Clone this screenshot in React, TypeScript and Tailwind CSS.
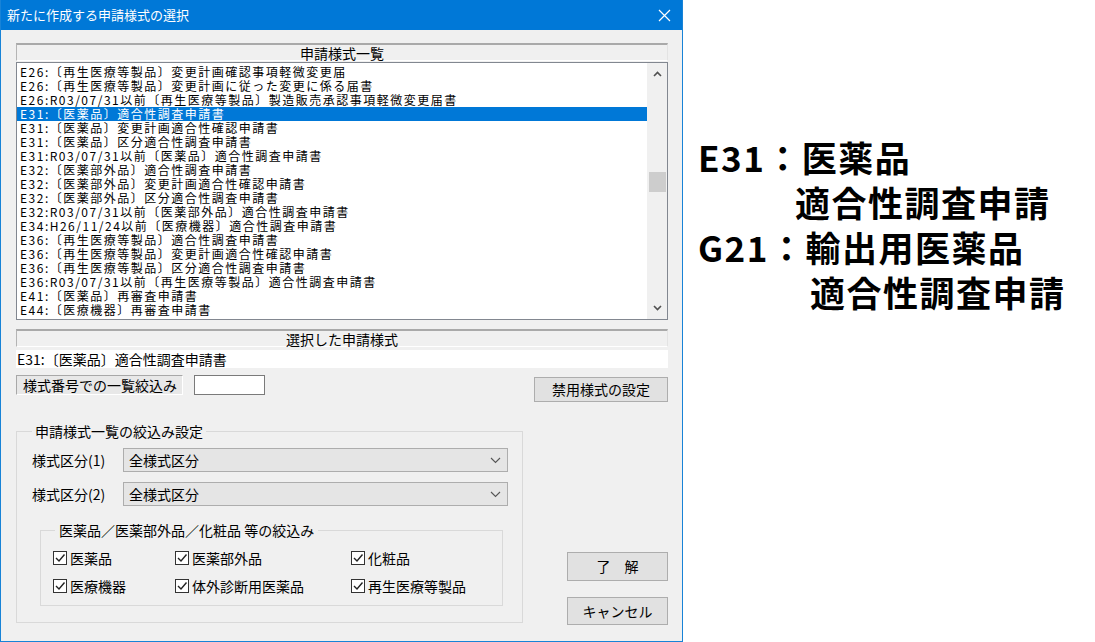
const UI = { fontFamily: '"Noto Sans CJK JP", "Noto Sans", sans-serif' };

const rows = [
  "E26:〔再生医療等製品〕変更計画確認事項軽微変更届",
  "E26:〔再生医療等製品〕変更計画に従った変更に係る届書",
  "E26:R03/07/31以前〔再生医療等製品〕製造販売承認事項軽微変更届書",
  "E31:〔医薬品〕適合性調査申請書",
  "E31:〔医薬品〕変更計画適合性確認申請書",
  "E31:〔医薬品〕区分適合性調査申請書",
  "E31:R03/07/31以前〔医薬品〕適合性調査申請書",
  "E32:〔医薬部外品〕適合性調査申請書",
  "E32:〔医薬部外品〕変更計画適合性確認申請書",
  "E32:〔医薬部外品〕区分適合性調査申請書",
  "E32:R03/07/31以前〔医薬部外品〕適合性調査申請書",
  "E34:H26/11/24以前〔医療機器〕適合性調査申請書",
  "E36:〔再生医療等製品〕適合性調査申請書",
  "E36:〔再生医療等製品〕変更計画適合性確認申請書",
  "E36:〔再生医療等製品〕区分適合性調査申請書",
  "E36:R03/07/31以前〔再生医療等製品〕適合性調査申請書",
  "E41:〔医薬品〕再審査申請書",
  "E44:〔医療機器〕再審査申請書",
];

const HeaderBar = ({ label }: { label: string }) => (
  <div className="h-[18px] flex items-center justify-center bg-[#f0f0f0] border-t-2 border-t-[#a9a9a9] border-l border-l-[#b4b4b4] border-r border-r-[#e3e3e3] border-b border-b-white text-[14px] leading-[14px] text-black">
    {label}
  </div>
);

const Chevron = ({ up }: { up?: boolean }) => (
  <svg width="9" height="6" viewBox="0 0 9 6">
    <polyline
      points={up ? "1,5 4.5,1.5 8,5" : "1,1 4.5,4.5 8,1"}
      fill="none"
      stroke="#505050"
      strokeWidth="1.6"
    />
  </svg>
);

const Select = ({ label }: { label: string }) => (
  <div className="flex items-center">
    <div className="w-[91px] text-[14px] leading-[18px]">{label}</div>
    <div className="w-[385px] h-[24px] flex items-center justify-between pl-[5px] pr-[6px] bg-[#e5e5e5] border border-[#adadad] text-[14px]">
      <span>全様式区分</span>
      <svg width="11" height="7" viewBox="0 0 11 7">
        <polyline points="1,1 5.5,5.5 10,1" fill="none" stroke="#555" strokeWidth="1.1" />
      </svg>
    </div>
  </div>
);

const Check = ({ label }: { label: string }) => (
  <div className="flex items-center h-[18px] text-[14px]">
    <div className="w-[14px] h-[14px] border border-[#333] bg-white flex items-center justify-center mr-[3px]">
      <svg width="12" height="12" viewBox="0 0 12 12">
        <polyline points="2,6 5,9 10.5,2.5" fill="none" stroke="#222" strokeWidth="1.4" />
      </svg>
    </div>
    <span>{label}</span>
  </div>
);

const Button = ({ label, className }: { label: string; className: string }) => (
  <div
    className={`flex items-center justify-center bg-[#e1e1e1] border border-[#adadad] text-[14px] text-black ${className}`}
  >
    {label}
  </div>
);

export default function App() {
  return (
    <div className="flex w-[1095px] h-[642px] bg-white overflow-hidden" style={UI}>
      <div className="w-[683px] h-[642px] flex flex-col bg-[#f0f0f0] border-l border-r border-b border-[#1883d7] text-black">
        {/* title bar */}
        <div className="h-[30px] shrink-0 bg-[#0078d7] flex items-center justify-between pl-[6px] pr-[11px] text-white text-[13px]">
          <span>新たに作成する申請様式の選択</span>
          <svg width="13" height="13" viewBox="0 0 13 13">
            <path d="M1 1 L12 12 M12 1 L1 12" stroke="white" strokeWidth="1.2" />
          </svg>
        </div>

        <div className="flex flex-col pl-[15px] pr-[14px]">
          <div className="mt-[13px]">
            <HeaderBar label="申請様式一覧" />
          </div>

          {/* list box */}
          <div className="mt-[1px] h-[258px] flex bg-white border border-[#828790] overflow-hidden">
            <div className="flex-1 pt-[2px] overflow-hidden">
              {rows.map((r, i) => (
                <div
                  key={i}
                  className={`h-[14px] leading-[14px] text-[12px] tracking-[1.5px] pl-[3px] whitespace-nowrap ${
                    i === 3 ? "bg-[#0078d7] text-white" : "text-black"
                  }`}
                >
                  {r}
                </div>
              ))}
            </div>
            <div className="w-[20px] shrink-0 bg-[#f0f0f0] flex flex-col items-center">
              <div className="h-[22px] flex items-center justify-center">
                <Chevron up />
              </div>
              <div className="mt-[87px] w-[17px] h-[20px] bg-[#cdcdcd]" />
              <div className="flex-1" />
              <div className="h-[22px] flex items-center justify-center">
                <Chevron />
              </div>
            </div>
          </div>

          <div className="mt-[9px]">
            <HeaderBar label="選択した申請様式" />
          </div>
          <div className="mt-[3px] h-[18px] bg-white flex items-center pl-[1px] text-[14px] whitespace-nowrap">
            E31:〔医薬品〕適合性調査申請書
          </div>

          <div className="mt-[7px] flex items-start">
            <div className="w-[167px] h-[20px] flex items-center pl-[6px] bg-[#e8e8e8] border-t border-l border-[#a8a8a8] border-b border-r border-b-white border-r-white text-[14px]">
              様式番号での一覧絞込み
            </div>
            <div className="ml-[11px] w-[71px] h-[20px] bg-white border border-[#7a7a7a]" />
            <Button label="禁用様式の設定" className="ml-auto mt-[2px] w-[134px] h-[25px]" />
          </div>

          <div className="mt-[20px] flex items-start">
            <fieldset className="w-[507px] h-[201px] border border-[#d9d9d9] pl-[15px] pr-[14px]">
              <legend className="px-[3px] text-[14px] leading-[18px]">申請様式一覧の絞込み設定</legend>
              <div className="mt-[8px]">
                <Select label="様式区分(1)" />
              </div>
              <div className="mt-[10px]">
                <Select label="様式区分(2)" />
              </div>
              <fieldset className="mt-[15px] ml-[8px] mr-[5px] h-[85px] border border-[#d9d9d9] pl-[12px]">
                <legend className="ml-[2px] px-[4px] text-[14px] leading-[18px]">
                  医薬品／医薬部外品／化粧品 等の絞込み
                </legend>
                <div className="mt-[10px] grid grid-cols-[122px_176px_1fr] gap-y-[10px]">
                  <Check label="医薬品" />
                  <Check label="医薬部外品" />
                  <Check label="化粧品" />
                  <Check label="医療機器" />
                  <Check label="体外診断用医薬品" />
                  <Check label="再生医療等製品" />
                </div>
              </fieldset>
            </fieldset>

            <div className="ml-auto flex flex-col">
              <Button label="了　解" className="mt-[130px] w-[101px] h-[29px]" />
              <Button label="キャンセル" className="mt-[16px] w-[101px] h-[28px] text-[13px]" />
            </div>
          </div>
        </div>
      </div>

      {/* annotation */}
      <div className="flex-1 pl-[15px] pt-[134px] text-[35px] leading-[45px] font-bold text-black tracking-[1.5px]">
        <div>E31：医薬品</div>
        <div className="pl-[97px]">適合性調査申請</div>
        <div>G21：輸出用医薬品</div>
        <div className="pl-[112px]">適合性調査申請</div>
      </div>
    </div>
  );
}
